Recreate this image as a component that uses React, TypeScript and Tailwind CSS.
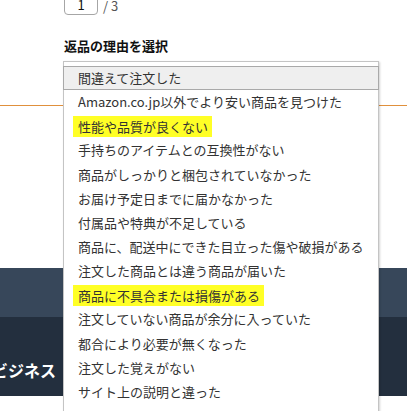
const reasons = [
  "間違えて注文した",
  "Amazon.co.jp以外でより安い商品を見つけた",
  "性能や品質が良くない",
  "手持ちのアイテムとの互換性がない",
  "商品がしっかりと梱包されていなかった",
  "お届け予定日までに届かなかった",
  "付属品や特典が不足している",
  "商品に、配送中にできた目立った傷や破損がある",
  "注文した商品とは違う商品が届いた",
  "商品に不具合または損傷がある",
  "注文していない商品が余分に入っていた",
  "都合により必要が無くなった",
  "注文した覚えがない",
  "サイト上の説明と違った",
];

const marked = [2, 9];

const font = { fontFamily: '"Noto Sans CJK JP", "Liberation Sans", sans-serif' };

export default function App() {
  return (
    <div className="relative w-[407px] h-[411px] overflow-hidden bg-white" style={font}>
      <div className="h-[120px] pl-[64px]">
        <div className="flex items-end gap-[5px] -mt-[15px]">
          <div className="w-[34px] h-[30px] rounded-[4px] border border-[#a6a6a6] flex items-end justify-center pb-[1px] text-[13px] leading-[16px] text-[#111]">
            1
          </div>
          <span className="text-[13px] leading-[16px] text-[#555] pb-[1px]">/ 3</span>
        </div>
        <div className="mt-[22px] text-[13px] leading-[18px] font-bold text-[#111]">返品の理由を選択</div>
      </div>
      <div className="h-px bg-[#e0903c]" />
      <div className="h-[162px]" />
      <div className="h-[49px] bg-[#37475a]" />
      <div className="h-[79px] bg-[#232f3e] relative">
        <div className="absolute right-[351px] top-[43px] text-[16px] leading-[20px] font-bold text-white whitespace-nowrap">
          でビジネス
        </div>
      </div>

      <div className="absolute left-[63px] top-[61px] w-[316px] bg-white border border-[#c4c4c4] shadow-[1px_1px_2px_rgba(0,0,0,0.18)] pt-[4px] pb-[10px]">
        {reasons.map((r, i) => (
          <div
            key={r}
            className={
              i === 0
                ? "h-[24.15px] flex items-center pl-[14px] text-[13px] leading-[16px] text-[#333] bg-[#efefef] border border-[#a9a9a9] -mx-px"
                : "h-[24.15px] flex items-center pl-[14px] text-[13px] leading-[16px] text-[#333] whitespace-nowrap"
            }
          >
            {marked.includes(i) ? (
              <span className="bg-[#ffff26] -ml-[5px] pl-[5px] pr-[4px] py-[2px] leading-[17px]">{r}</span>
            ) : (
              r
            )}
          </div>
        ))}
      </div>
    </div>
  );
}
